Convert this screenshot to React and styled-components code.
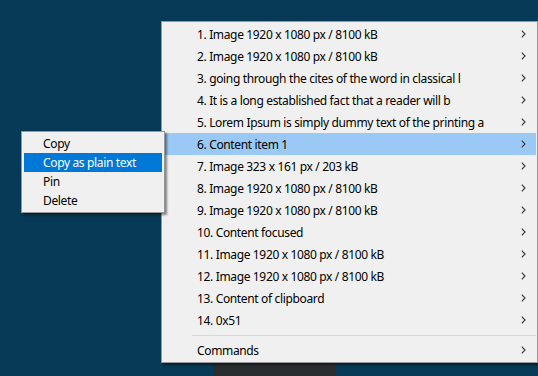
import React from "react";
import styled, { createGlobalStyle } from "styled-components";

const Global = createGlobalStyle`
  html, body { margin: 0; padding: 0; }
  body {
    width: 538px; height: 376px; overflow: hidden;
    background: #073a57;
    font-family: "Noto Sans", "Segoe UI", sans-serif;
  }
`;

const Desktop = styled.div`
  position: relative;
  width: 538px;
  height: 376px;
  background: #073a57;
  overflow: hidden;
`;

const BackWindow = styled.div`
  position: absolute;
  left: 213px;
  top: 363px;
  width: 122px;
  height: 20px;
  background: #2a2d30;
`;

const Menu = styled.div`
  position: absolute;
  left: ${(p) => p.$left}px;
  top: ${(p) => p.$top}px;
  width: ${(p) => p.$width}px;
  box-sizing: border-box;
  background: #f0f0f0;
  border: 1px solid #979797;
  padding: ${(p) => p.$pad}px;
  box-shadow: 2px 2px 2px rgba(0, 0, 0, 0.45);
  display: flex;
  flex-direction: column;
`;

const Row = styled.div`
  height: ${(p) => p.$h}px;
  display: flex;
  align-items: center;
  padding-left: ${(p) => p.$indent}px;
  padding-right: 10px;
  font-size: 12px;
  letter-spacing: -0.35px;
  color: ${(p) => (p.$active === "strong" ? "#ffffff" : "#000000")};
  background: ${(p) =>
    p.$active === "strong" ? "#0078d7" : p.$active === "soft" ? "#99c9f4" : "transparent"};
  white-space: nowrap;
`;

const Label = styled.span`
  flex: 1;
  overflow: hidden;
`;

const Chevron = styled.svg`
  width: 5px;
  height: 8px;
  flex: none;
`;

const Separator = styled.div`
  height: 8px;
  display: flex;
  align-items: center;
  padding-left: 29px;
  &::after {
    content: "";
    flex: 1;
    height: 1px;
    background: #d7d7d7;
  }
`;

const Arrow = () => (
  <Chevron viewBox="0 0 5 8">
    <path d="M0.8 0.6 L4 4 L0.8 7.4" fill="none" stroke="#3c3c3c" strokeWidth="1.2" />
  </Chevron>
);

const items = [
  "1. Image 1920 x 1080 px / 8100 kB",
  "2. Image 1920 x 1080 px / 8100 kB",
  "3. going through the cites of the word in classical l",
  "4. It is a long established fact that a reader will b",
  "5. Lorem Ipsum is simply dummy text of the printing a",
  "6. Content item 1",
  "7. Image 323 x 161 px / 203 kB",
  "8. Image 1920 x 1080 px / 8100 kB",
  "9. Image 1920 x 1080 px / 8100 kB",
  "10. Content focused",
  "11. Image 1920 x 1080 px / 8100 kB",
  "12. Image 1920 x 1080 px / 8100 kB",
  "13. Content of clipboard",
  "14. 0x51",
];

const ctx = ["Copy", "Copy as plain text", "Pin", "Delete"];

export default function App() {
  return (
    <>
      <Global />
      <Desktop>
        <BackWindow />
        <Menu $left={161} $top={21} $width={377} $pad={1}>
          {items.map((t, i) => (
            <Row key={t} $h={22} $indent={34} $active={i === 5 ? "soft" : null}>
              <Label>{t}</Label>
              <Arrow />
            </Row>
          ))}
          <Separator />
          <Row $h={22} $indent={34}>
            <Label>Commands</Label>
            <Arrow />
          </Row>
        </Menu>
        <Menu $left={21} $top={131} $width={144} $pad={2}>
          {ctx.map((t, i) => (
            <Row key={t} $h={19} $indent={19} $active={i === 1 ? "strong" : null}>
              <Label>{t}</Label>
            </Row>
          ))}
        </Menu>
      </Desktop>
    </>
  );
}
